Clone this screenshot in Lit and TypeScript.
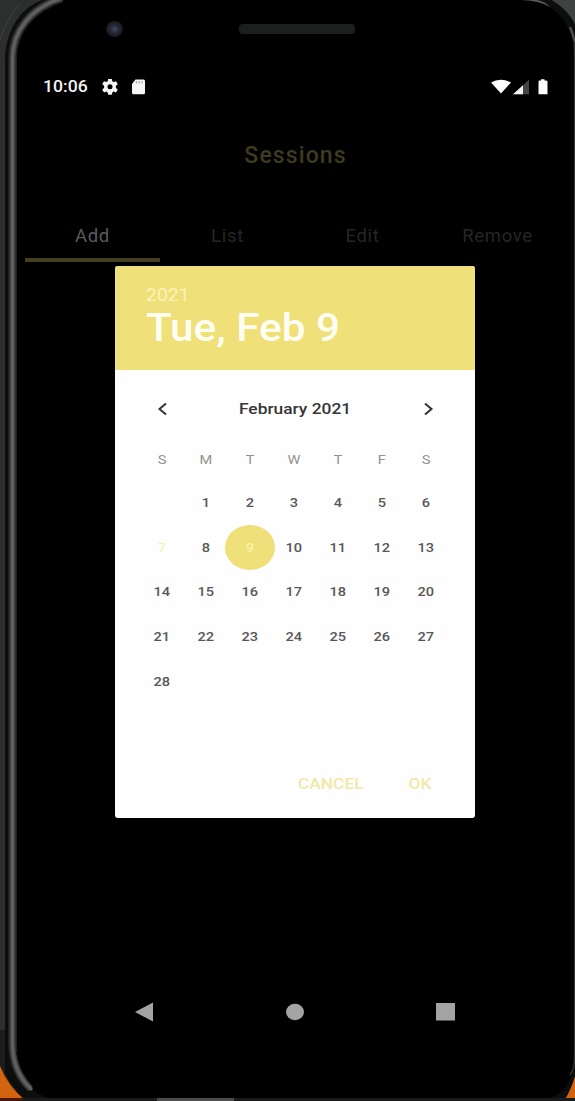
import { LitElement, html, css } from "lit";
import { customElement } from "lit/decorators.js";
import { classMap } from "lit/directives/class-map.js";

@customElement("phone-frame")
class PhoneFrame extends LitElement {
  static styles = css`
    :host { display: block; }
    svg { display: block; }
  `;
  render() {
    return html`<svg width="575" height="1101" viewBox="0 0 575 1101">
      <defs>
        <radialGradient id="lens"><stop offset="0" stop-color="#454a68" /><stop offset=".45" stop-color="#2a2c3a" /><stop offset="1" stop-color="#15161c" /></radialGradient>
      </defs>
      <rect width="575" height="1101" fill="#2d2f2e" />
      <path d="M0 1060H60V1101H0ZM530 1050H575V1101H530Z" fill="#d2630f" />
      <path d="M0 1030V1066Q8 1086 25 1100H40V1030Z" fill="#1b1e1d" />
      <path d="M5 60C5 32 20 8 42 0H552Q568 9 575 24V1076Q571 1090 564 1101H26Q11 1088 5 1072Z" fill="#0c0e0d" />
      <path d="M14 60C14 32 32 5 64 0H524Q574 4 574 62V1060Q573 1090 550 1098H48C24 1090 14 1066 14 1040Z" fill="#000" />
      <g fill="none">
        <path d="M62 -2C30 8 12.500 32 12.500 58V1044C12.500 1062 19 1078 31 1088" stroke="#1e1f1f" stroke-width="9" />
        <path d="M62 -2C30 8 12.500 32 12.500 58V1044C12.500 1062 19 1078 31 1089" stroke="#424242" stroke-width="6" />
        <path d="M62 -2C30 8 12.500 32 12.500 58V1044C12.500 1062 19 1078 32 1090" stroke="#606060" stroke-width="3" />
      </g>
      <path d="M16.500 1052C19 1068 26 1080 36 1090V1052Z" fill="#000" />
      <path d="M0 40Q7 17 20 4" fill="none" stroke="#404241" />
      <path d="M522 0Q541 1 550 7Q545 1 536 0Z" fill="#5a5a5a" />
      <path d="M552 0Q568 10 575 24V0Z" fill="#404141" />
      <path d="M570 27Q573 34 575 42" fill="none" stroke="#505050" stroke-width="2.200" />
      <path d="M574.500 42V1060Q574 1070 570 1075" fill="none" stroke="#333534" stroke-width="1.300" />
      <rect y="1098" width="575" height="3" fill="#1b1a1a" />
      <rect y="1098" width="23" height="3" fill="#4b1507" />
      <rect x="157" y="1098" width="77" height="3" fill="#4b4b4b" />
      <ellipse cx="114.500" cy="29" rx="8.500" ry="8" fill="url(#lens)" />
      <rect x="239" y="24" width="116" height="10" rx="4" fill="#1d1f1e" />
    </svg>`;
  }
}

@customElement("status-bar")
class StatusBar extends LitElement {
  static styles = css`
    :host { display: flex; justify-content: space-between; height: 24px; padding: 0 27px 0 43px; }
    .side { display: flex; align-items: center; }
    .time { width: 59px; font: 500 16px/24px Roboto, sans-serif; color: #f3f3f3; white-space: nowrap; transform: scaleX(1.100); transform-origin: left; }
    svg { display: block; }
  `;
  render() {
    return html`
      <div class="side">
        <span class="time">10:06</span>
        <svg width="43" height="16" viewBox="0 0 43 16" fill="#f5f5f5">
          <path fill-rule="evenodd" d="M6.200 0h3.600l.5 2.300 1.400.8 2.300-.8 1.800 2.900-1.900 1.600v2.100l1.900 1.600-1.800 2.900-2.300-.8-1.400.8-.5 2.300H6.200l-.5-2.300-1.400-.8-2.300.8-1.800-2.900 1.900-1.600V6.800L.2 5.200 2 2.300l2.300.8 1.400-.8ZM8 5.200a2.500 2.500 0 1 0 0 5 2.500 2.500 0 1 0 0-5Z" />
          <path d="M33.500.5H41.500Q43 .5 43 2V13.800Q43 15.300 41.500 15.300H31.500Q30 15.300 30 13.800V5Z" />
          <path d="M34.500 2V4.500M37.200 2V4.500M39.900 2V4.500" stroke="#aaa" stroke-width="1.200" />
        </svg>
      </div>
      <div class="side">
        <svg width="57" height="16" viewBox="0 0 57 16">
          <path d="M0 3.500Q9.500-2 20 3.500L10 14.500Z" fill="#fff" />
          <path d="M22 15.300L38 .8V15.300Z" fill="#444" />
          <path d="M22 15.300L32 6.200V15.300Z" fill="#f3f3f3" />
          <path d="M48.500 1.600H50V.3H53.500V1.600H55Q56.500 1.600 56.500 3V15.300H47.500V3Q47.500 1.600 48.500 1.600Z" fill="#fff" />
        </svg>
      </div>`;
  }
}

@customElement("date-picker")
class DatePicker extends LitElement {
  static styles = css`
    :host { display: flex; flex-direction: column; width: 360px; height: 552px; background: #fefefe; border-radius: 3px; overflow: hidden; font-family: Roboto, sans-serif; }
    .head { height: 104px; box-sizing: border-box; padding: 19px 0 0 31px; background: #efe07a; }
    .stretch { transform-origin: left; white-space: nowrap; }
    .year { display: block; width: max-content; font-size: 18px; line-height: 20px; color: #fbf3ba; transform: scaleX(1.080); }
    .date { display: block; width: max-content; font-weight: 500; font-size: 39px; line-height: 46px; color: #fffef2; transform: scaleX(1.085); }
    .nav { display: flex; align-items: center; justify-content: space-between; height: 77px; padding: 0 40px; }
    .month { font-weight: 500; font-size: 15.500px; color: #363636; transform: scaleX(1.120); }
    .grid { display: grid; grid-template-columns: repeat(7, 44px); grid-template-rows: 42px repeat(6, 44.600px); padding-left: 25px; margin-top: -9px; }
    .cell { display: flex; align-items: center; justify-content: center; font-size: 13.500px; font-weight: 500; color: #585858; }
    .cell span { transform: scaleX(1.080); }
    .wk { color: #929292; font-weight: 400; }
    .today { color: #f6f1bd; }
    .sel { width: 50px; height: 45px; margin-left: -3px; border-radius: 50%; background: #efe07a; color: #f9f0a8; }
    .actions { display: flex; justify-content: flex-end; gap: 47px; padding-right: 44px; margin-top: auto; height: 69px; align-items: center; font-weight: 500; font-size: 15.500px; color: #f1e9a6; }
    .actions span { transform: scaleX(1.120); transform-origin: right; }
  `;
  render() {
    const days = ["", ...Array.from({ length: 28 }, (_, i) => String(i + 1))];
    return html`
      <div class="head">
        <span class="stretch year">2021</span>
        <span class="stretch date">Tue, Feb 9</span>
      </div>
      <div class="nav">
        <svg width="14" height="14" viewBox="0 0 14 14" fill="none" stroke="#333" stroke-width="2"><path d="M11 1.500L4.500 7L11 12.500" /></svg>
        <span class="month">February 2021</span>
        <svg width="14" height="14" viewBox="0 0 14 14" fill="none" stroke="#333" stroke-width="2"><path d="M4 1.500L10.500 7L4 12.500" /></svg>
      </div>
      <div class="grid">
        ${["S", "M", "T", "W", "T", "F", "S"].map((d) => html`<div class="cell wk"><span>${d}</span></div>`)}
        ${days.map((d) => html`<div class=${classMap({ cell: true, today: d === "7", sel: d === "9" })}><span>${d}</span></div>`)}
      </div>
      <div class="actions"><span>CANCEL</span><span>OK</span></div>`;
  }
}

@customElement("app-root")
class AppRoot extends LitElement {
  static styles = css`
    :host { display: grid; width: 575px; height: 1101px; overflow: hidden; background: #000; font-family: Roboto, sans-serif; }
    phone-frame, .screen { grid-area: 1 / 1; }
    .screen { display: flex; flex-direction: column; padding-top: 75px; height: 1101px; box-sizing: border-box; z-index: 1; }
    h1 { margin: 41px 0 0; padding-left: 16px; height: 32px; line-height: 32px; font-size: 23px; font-weight: 500; text-align: center; color: #3e3b20; letter-spacing: 1.100px; }
    .tabs { display: grid; grid-template-columns: repeat(4, 135px); margin: 39px 0 0 25px; height: 51px; }
    .tab { display: flex; align-items: center; justify-content: center; padding-top: 2px; font-size: 18.500px; color: #262626; border-bottom: 4px solid transparent; letter-spacing: .7px; }
    .on { color: #5b5b5b; border-color: #454024; }
    date-picker { margin: 4px 0 0 115px; }
    .keys { display: flex; justify-content: space-between; margin: 184px 120px 0 135px; align-items: center; height: 20px; }
    .keys svg { display: block; }
  `;
  render() {
    return html`
      <phone-frame></phone-frame>
      <div class="screen">
        <status-bar></status-bar>
        <h1>Sessions</h1>
        <div class="tabs">
          ${["Add", "List", "Edit", "Remove"].map((t, i) => html`<div class=${classMap({ tab: true, on: i === 0 })}>${t}</div>`)}
        </div>
        <date-picker></date-picker>
        <div class="keys">
          <svg width="18" height="20"><path d="M0 10L18 .5V19.500Z" fill="#a3a3a3" /></svg>
          <svg width="18" height="18"><ellipse cx="9" cy="9" rx="9" ry="8.200" fill="#a3a3a3" /></svg>
          <svg width="19" height="18"><rect width="19" height="17.500" fill="#a3a3a3" /></svg>
        </div>
      </div>`;
  }
}
